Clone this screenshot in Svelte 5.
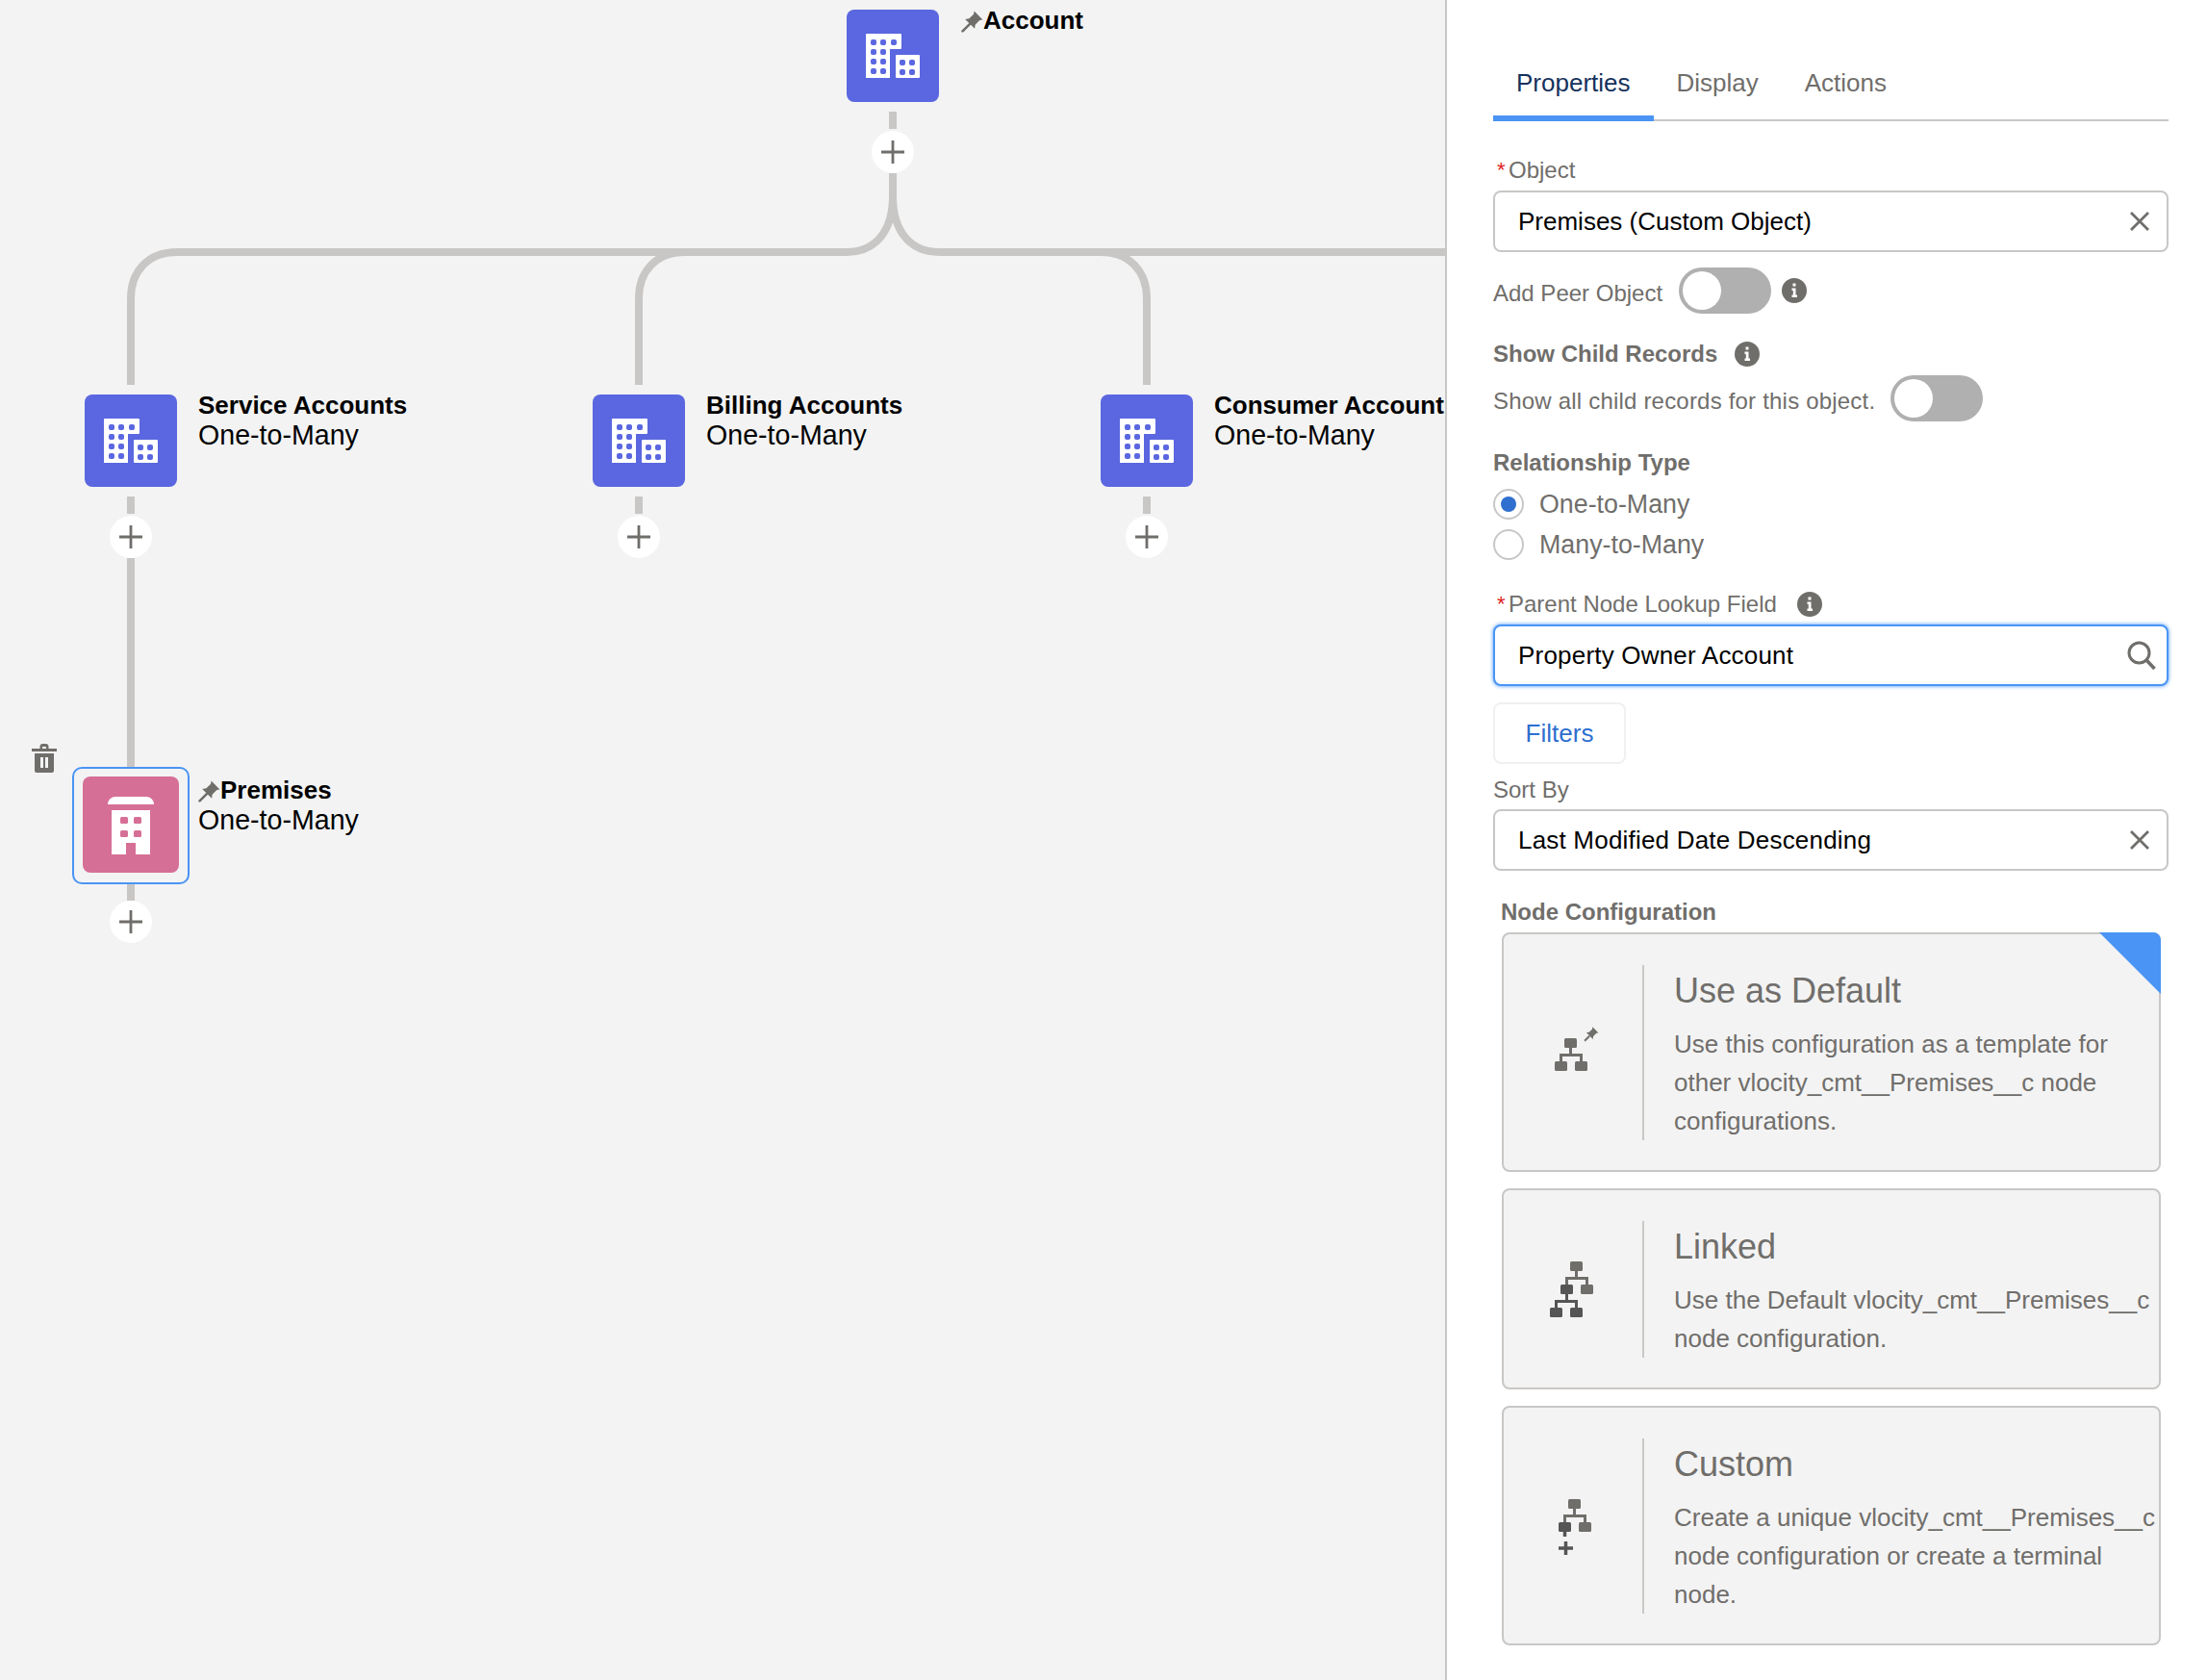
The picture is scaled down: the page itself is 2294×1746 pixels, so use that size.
<script>
  const treeNodes = [
    { x: 88, y: 410, title: 'Service Accounts' },
    { x: 616, y: 410, title: 'Billing Accounts' },
    { x: 1144, y: 410, title: 'Consumer Account' }
  ];

  const plusButtons = [
    [928, 158],
    [136, 558],
    [664, 558],
    [1192, 558],
    [136, 958]
  ];

  const cards = [
    {
      id: 'default',
      title: 'Use as Default',
      text: 'Use this configuration as a template for other vlocity_cmt__Premises__c node configurations.'
    },
    {
      id: 'linked',
      title: 'Linked',
      text: 'Use the Default vlocity_cmt__Premises__c node configuration.'
    },
    {
      id: 'custom',
      title: 'Custom',
      text: 'Create a unique vlocity_cmt__Premises__c node configuration or create a terminal node.'
    }
  ];
</script>

{#snippet pin()}
  <svg class="pin" width="23" height="23" viewBox="0 0 22 22" fill="#706e6b">
    <path d="M13 .5 21.500 9l-3 .5L14 14l-.5 4L4 8.500l4-.5 4.500-4.500z" />
    <path d="M8.500 13.500 1.500 20.500" stroke="#706e6b" stroke-width="2.500" stroke-linecap="round" />
  </svg>
{/snippet}

{#snippet accountIcon()}
  <svg width="96" height="96" viewBox="0 0 96 96">
    <path fill="#fff" d="M21 25h35a1 1 0 0 1 1 1v14a1 1 0 0 1-1 1H45v30H20V26a1 1 0 0 1 1-1z" />
    <rect x="51" y="47" width="25" height="24" rx="1" fill="#fff" />
    <g fill="#5a67e0">
      {#each [[25, 31], [35, 31], [46, 31], [25, 41], [35, 41], [25, 51], [35, 51], [25, 61], [35, 61], [55, 52], [65, 52], [55, 62], [65, 62]] as w}
        <rect x={w[0]} y={w[1]} width="6" height="6" rx="2" />
      {/each}
    </g>
  </svg>
{/snippet}

{#snippet info()}
  <svg class="info" width="26" height="26" viewBox="0 0 26 26">
    <circle cx="13" cy="13" r="13" fill="#706e6b" />
    <path fill="#fff" d="M11.500 5.500h3v3h-3zM10.500 10.500h4v7h1.500v2.500h-5.500v-2.500h1.300v-4.500h-1.300z" />
  </svg>
{/snippet}

{#snippet close()}
  <svg width="20" height="20" viewBox="0 0 20 20" stroke="#706e6b" stroke-width="2.800" fill="none">
    <path d="M1 1l18 18M19 1L1 19" />
  </svg>
{/snippet}

{#snippet configIcon(id)}
  <svg width="60" height="60" viewBox="0 0 60 60" fill="none">
    {#if id === 'default'}
      <g fill="#706e6b">
        <rect x="21" y="15" width="13" height="10" rx="1.500" />
        <rect x="11" y="39" width="13" height="10" rx="1.500" />
        <rect x="32" y="39" width="13" height="10" rx="1.500" />
      </g>
      <path d="M27.500 25v6M17.500 39v-6.500h21V39" stroke="#706e6b" stroke-width="3" />
      <g transform="translate(41 3) scale(.72)">
        <path fill="#706e6b" d="M13 .5 21.500 9l-3 .5L14 14l-.5 4L4 8.500l4-.5 4.500-4.500z" />
        <path d="M8.500 13.500 1.500 20.500" stroke="#706e6b" stroke-width="2.800" />
      </g>
    {:else if id === 'linked'}
      <g fill="#706e6b">
        <rect x="27" y="1" width="13" height="10" rx="1.500" />
        <rect x="38" y="25" width="13" height="10" rx="1.500" />
      </g>
      <path d="M33.500 11v6M23.500 25v-6.500h21V25" stroke="#706e6b" stroke-width="3" />
      <g fill="#555">
        <rect x="17" y="25" width="13" height="10" rx="1.500" />
        <rect x="6" y="49" width="13" height="10" rx="1.500" />
        <rect x="27" y="49" width="13" height="10" rx="1.500" />
      </g>
      <path d="M23.500 35v6M12.500 49v-6.500h21V49" stroke="#555" stroke-width="3" />
    {:else}
      <g fill="#706e6b">
        <rect x="25" y="2" width="13" height="10" rx="1.500" />
        <rect x="36" y="26" width="13" height="10" rx="1.500" />
      </g>
      <path d="M31.500 12v6M21.500 26v-6.500h21V26" stroke="#706e6b" stroke-width="3" />
      <rect x="15" y="26" width="13" height="10" rx="1.500" fill="#555" />
      <path d="M21.500 36v5M15 53h15M22.500 46v14" stroke="#555" stroke-width="3.500" />
    {/if}
  </svg>
{/snippet}

<div class="page">
  <main class="canvas">
    <svg class="links" width="1503" height="1000" viewBox="0 0 1503 1000" fill="none" stroke="#c9c7c5" stroke-width="8">
      <path d="M928 116v18M928 180v24C928 240 910 262 880 262H184C154 262 136 282 136 310v90" />
      <path d="M928 204C928 240 946 262 976 262H1503" />
      <path d="M616 262H712C682 262 664 282 664 310v90" />
      <path d="M1144 262C1174 262 1192 282 1192 310v90" />
      <path d="M136 516v18M664 516v18M1192 516v18M136 580v218M136 918v18" />
    </svg>

    {#each plusButtons as p}
      <button class="plus" style="left:{p[0] - 22}px;top:{p[1] - 22}px" aria-label="Add">
        <svg width="24" height="24" viewBox="0 0 24 24" stroke="#706e6b" stroke-width="2.800"><path d="M12 0v24M0 12h24" /></svg>
      </button>
    {/each}

    <div class="node" style="left:880px;top:10px">
      <div class="tile">{@render accountIcon()}</div>
      <div class="label top">
        <div class="name">{@render pin()}Account</div>
      </div>
    </div>

    {#each treeNodes as n}
      <div class="node" style="left:{n.x}px;top:{n.y}px">
        <div class="tile">{@render accountIcon()}</div>
        <div class="label">
          <div class="name">{n.title}</div>
          <div class="rel">One-to-Many</div>
        </div>
      </div>
    {/each}

    <svg class="trash" width="26" height="30" viewBox="0 0 26 30" fill="#706e6b">
      <path d="M0 5h8.500V3a3 3 0 0 1 3-3h3a3 3 0 0 1 3 3v2H26v3H0zM11 5h4V3h-4z" fill-rule="evenodd" />
      <path d="M3 10h20v18a2 2 0 0 1-2 2H5a2 2 0 0 1-2-2zm6 4v11h3V14zm5 0v11h3V14z" fill-rule="evenodd" />
    </svg>

    <div class="selected">
      <div class="tile pink">
        <svg width="100" height="100" viewBox="0 0 100 100">
          <path fill="#fff" d="M26 29a8 8 0 0 1 8-8h32a8 8 0 0 1 8 8zM30 35h40v46H55V69H45v12H30z" />
          <g fill="#d66f96">
            <rect x="39" y="42" width="8" height="7" rx="1.500" />
            <rect x="53" y="42" width="8" height="7" rx="1.500" />
            <rect x="39" y="56" width="8" height="7" rx="1.500" />
            <rect x="53" y="56" width="8" height="7" rx="1.500" />
          </g>
        </svg>
      </div>
    </div>
    <div class="label premises">
      <div class="name">{@render pin()}Premises</div>
      <div class="rel">One-to-Many</div>
    </div>
  </main>

  <aside class="panel">
    <nav class="tabs">
      <span class="tab active">Properties</span>
      <span class="tab">Display</span>
      <span class="tab">Actions</span>
    </nav>

    <div class="lbl first"><span class="req">*</span><span>Object</span></div>
    <div class="input">
      <span>Premises (Custom Object)</span>
      {@render close()}
    </div>

    <div class="toggle-row peer">
      <span class="lbl-inline">Add Peer Object</span>
      <span class="toggle"></span>
      {@render info()}
    </div>

    <div class="lbl bold child"><span>Show Child Records</span>{@render info()}</div>
    <div class="toggle-row all">
      <span class="lbl-inline">Show all child records for this object.</span>
      <span class="toggle"></span>
    </div>

    <div class="lbl bold rel-type">Relationship Type</div>
    <div class="radios">
      <div class="radio-row"><span class="radio on"></span>One-to-Many</div>
      <div class="radio-row"><span class="radio"></span>Many-to-Many</div>
    </div>

    <div class="lbl parent"><span class="req">*</span><span>Parent Node Lookup Field</span>{@render info()}</div>
    <div class="input focus">
      <span class="wide">Property Owner Account</span>
      <svg width="30" height="30" viewBox="0 0 30 30" fill="none" stroke="#706e6b" stroke-width="3">
        <circle cx="12.500" cy="12.500" r="10.500" />
        <path d="M20 20l8.500 9" stroke-width="3.600" />
      </svg>
    </div>

    <button class="filters">Filters</button>

    <div class="lbl sort">Sort By</div>
    <div class="input">
      <span class="wide">Last Modified Date Descending</span>
      {@render close()}
    </div>

    <div class="lbl bold node-config">Node Configuration</div>
    <div class="cards">
      {#each cards as c}
        <div class="card">
          {#if c.id === 'default'}<span class="corner"></span>{/if}
          <div class="card-icon">{@render configIcon(c.id)}</div>
          <div class="card-body">
            <div class="card-title">{c.title}</div>
            <div class="card-text">{c.text}</div>
          </div>
        </div>
      {/each}
    </div>
  </aside>
</div>

<style>
  :global(body) { margin: 0; font-family: "Liberation Sans", Arial, sans-serif; }

  .page { display: flex; width: 2294px; height: 1746px; overflow: hidden; }

  /* Canvas */
  .canvas { position: relative; flex: 0 0 1502px; background: #f3f3f3; overflow: hidden; }
  .links { position: absolute; left: 0; top: 0; }
  .plus { position: absolute; width: 44px; height: 44px; padding: 0; border: none; border-radius: 50%; background: #fff; display: flex; align-items: center; justify-content: center; }
  .node { position: absolute; display: flex; white-space: nowrap; }
  .tile { width: 96px; height: 96px; border-radius: 8px; background: #5a67e0; }
  .tile.pink { width: 100px; height: 100px; background: #d66f96; }
  .tile svg { display: block; }
  .label { margin-left: 22px; color: #000; }
  .label.top { margin: 0 0 0 23px; line-height: 22px; }
  .name { font-size: 26px; font-weight: 700; line-height: 30px; margin-top: -4px; display: flex; align-items: center; }
  .rel { font-size: 28.600px; line-height: 32px; }
  .pin { flex: none; margin-top: 2px; }
  .selected { position: absolute; left: 75px; top: 797px; width: 122px; height: 122px; box-sizing: border-box; padding: 8px 9px; border: 2px solid #4a94f5; border-radius: 10px; background: #f3f3f3; }
  .premises { position: absolute; left: 206px; top: 810px; margin: 0; white-space: nowrap; }
  .trash { position: absolute; left: 33px; top: 773px; }

  /* Panel */
  .panel { flex: 1; box-sizing: border-box; padding: 0 40px 0 48px; background: #fff; border-left: 2px solid #c9c7c5; color: #706e6b; font-size: 24px; }
  .tabs { display: flex; height: 126px; box-sizing: border-box; border-bottom: 2px solid #c9c7c5; padding-top: 64px; font-size: 26px; }
  .tab { padding: 0 24px; height: 60px; line-height: 44px; }
  .tab.active { color: #16325c; height: 56px; border-bottom: 6px solid #4a94f5; }

  .lbl { line-height: 32px; display: flex; align-items: center; }
  .bold { font-weight: 700; }
  .req { color: #e02020; width: 11px; margin-left: 4px; margin-right: 1px; font-size: 22px; }
  .first { margin-top: 35px; margin-bottom: 5px; }
  .child { margin-top: 26px; gap: 18px; }
  .rel-type { margin-top: 27px; }
  .parent { margin-top: 31px; margin-bottom: 5px; gap: 0; }
  .parent :global(.info) { margin-left: 21px; }
  .sort { margin-top: 11px; margin-bottom: 4px; }
  .node-config { margin: 27px 0 5px 8px; }

  .input { display: flex; align-items: center; justify-content: space-between; box-sizing: border-box; height: 64px; padding: 0 18px 0 24px; border: 2px solid #c9c7c5; border-radius: 8px; background: #fff; color: #000; font-size: 26px; }
  .input svg { flex: none; }
  .input.focus { border-color: #4a94f5; box-shadow: 0 0 4px #4a94f5; padding-right: 11px; }
  .wide { letter-spacing: .2px; }

  .toggle-row { display: flex; align-items: center; }
  .peer { margin-top: 16px; }
  .all { margin-top: 6px; }
  .lbl-inline { padding-top: 6px; margin-right: 17px; }
  .all .lbl-inline { letter-spacing: .2px; margin-right: 16px; }
  .toggle { position: relative; display: block; width: 96px; height: 48px; border-radius: 24px; background: #b0b0b0; }
  .toggle::before { content: ""; position: absolute; left: 4px; top: 4px; width: 40px; height: 40px; border-radius: 50%; background: #fff; }
  .peer :global(.info) { margin-left: 11px; }

  .radios { margin-top: 12px; display: flex; flex-direction: column; gap: 12px; font-size: 26.800px; }
  .radio-row { display: flex; align-items: center; height: 30px; }
  .radio { position: relative; width: 32px; height: 32px; box-sizing: border-box; border: 2px solid #c9c7c5; border-radius: 50%; background: #fff; margin-right: 16px; }
  .radio.on::after { content: ""; position: absolute; left: 6px; top: 6px; width: 16px; height: 16px; border-radius: 50%; background: #2e6fd0; }

  .filters { display: block; margin-top: 17px; width: 138px; height: 64px; padding: 0; background: #fff; border: 2px solid #f0f0f0; border-radius: 8px; color: #2e6fd0; font: inherit; font-size: 26px; }

  .cards { margin-left: 9px; width: 685px; display: flex; flex-direction: column; gap: 17px; }
  .card { position: relative; display: flex; box-sizing: border-box; padding: 32px 2px 31px 0; background: #f3f3f3; border: 2px solid #c9c7c5; border-radius: 8px; }
  .corner { position: absolute; right: -2px; top: -2px; width: 64px; height: 64px; background: #4a94f5; border-top-right-radius: 8px; clip-path: polygon(0 0, 100% 0, 100% 100%); }
  .card-icon { flex: 0 0 144px; display: flex; align-items: center; justify-content: center; border-right: 2px solid #c9c7c5; }
  .card-icon svg { display: block; }
  .card-body { flex: 1; padding-left: 31px; }
  .card-title { font-size: 36px; line-height: 54px; margin-bottom: 8px; }
  .card-text { font-size: 26px; line-height: 40px; }
</style>
